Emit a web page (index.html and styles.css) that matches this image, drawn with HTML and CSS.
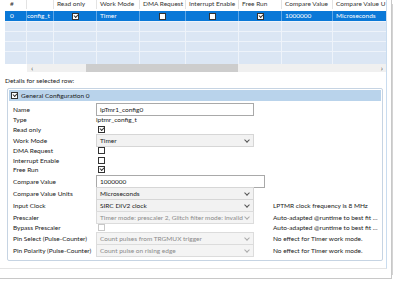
FILE: index.html
```html
<!DOCTYPE html>
<html lang="en">

<head>
    <meta charset="UTF-8">
    <title>LPTMR configuration</title>
    <link rel="stylesheet" href="styles.css">
</head>

<body>
    <div class="frame">
        <div class="panel">
            <div class="grid">
                <div class="row head">
                    <div class="cell c0">#</div>
                    <div class="cell c1"></div>
                    <div class="cell c2">Read only</div>
                    <div class="cell c3">Work Mode</div>
                    <div class="cell c4">DMA Request</div>
                    <div class="cell c5">Interrupt Enable</div>
                    <div class="cell c6">Free Run</div>
                    <div class="cell c7">Compare Value</div>
                    <div class="cell c8">Compare Value U</div>
                </div>
                <div class="row sel">
                    <div class="cell c0">0</div>
                    <div class="cell c1 clip">config_t</div>
                    <div class="cell c2 mid"><span class="box on"></span></div>
                    <div class="cell c3">Timer</div>
                    <div class="cell c4 mid"><span class="box"></span></div>
                    <div class="cell c5 mid"><span class="box"></span></div>
                    <div class="cell c6 mid"><span class="box on"></span></div>
                    <div class="cell c7">1000000</div>
                    <div class="cell c8">Microseconds</div>
                </div>
                <div class="row empty"><div class="cell c0"></div><div class="cell c1"></div><div class="cell c2"></div><div class="cell c3"></div><div class="cell c4"></div><div class="cell c5"></div><div class="cell c6"></div><div class="cell c7"></div><div class="cell c8"></div></div>
                <div class="row empty"><div class="cell c0"></div><div class="cell c1"></div><div class="cell c2"></div><div class="cell c3"></div><div class="cell c4"></div><div class="cell c5"></div><div class="cell c6"></div><div class="cell c7"></div><div class="cell c8"></div></div>
                <div class="row empty"><div class="cell c0"></div><div class="cell c1"></div><div class="cell c2"></div><div class="cell c3"></div><div class="cell c4"></div><div class="cell c5"></div><div class="cell c6"></div><div class="cell c7"></div><div class="cell c8"></div></div>
                <div class="row empty last"><div class="cell c0"></div><div class="cell c1"></div><div class="cell c2"></div><div class="cell c3"></div><div class="cell c4"></div><div class="cell c5"></div><div class="cell c6"></div><div class="cell c7"></div><div class="cell c8"></div></div>
                <div class="hscroll">
                    <div class="corner"></div>
                    <div class="track">
                        <span class="arrow">&lsaquo;</span>
                        <span class="thumb"></span>
                        <span class="arrow right">&rsaquo;</span>
                    </div>
                </div>
            </div>

            <div class="caption">Details for selected row:</div>

            <div class="group">
                <div class="group-head"><span class="box on"></span>General Configuration 0</div>
                <div class="form">
                    <div class="f tall"><span class="lbl">Name</span><span class="input">lpTmr1_config0</span></div>
                    <div class="f"><span class="lbl">Type</span><span class="val">lptmr_config_t</span></div>
                    <div class="f"><span class="lbl">Read only</span><span><span class="box on"></span></span></div>
                    <div class="f tall"><span class="lbl">Work Mode</span><span class="select">Timer<i class="chev"></i></span></div>
                    <div class="f"><span class="lbl">DMA Request</span><span><span class="box"></span></span></div>
                    <div class="f"><span class="lbl">Interrupt Enable</span><span><span class="box"></span></span></div>
                    <div class="f"><span class="lbl">Free Run</span><span><span class="box on"></span></span></div>
                    <div class="f tall"><span class="lbl">Compare Value</span><span class="input wide">1000000</span></div>
                    <div class="f tall"><span class="lbl">Compare Value Units</span><span class="select">Microseconds<i class="chev"></i></span></div>
                    <div class="f tall"><span class="lbl">Input Clock</span><span class="select">SIRC DIV2 clock<i class="chev"></i></span><span class="note">LPTMR clock frequency is 8 MHz</span></div>
                    <div class="f tall"><span class="lbl">Prescaler</span><span class="select off">Timer mode: prescaler 2, Glitch filter mode: invalid<i class="chev"></i></span><span class="note">Auto-adapted @runtime to best fit ...</span></div>
                    <div class="f"><span class="lbl">Bypass Prescaler</span><span><span class="box off"></span></span><span class="note">Auto-adapted @runtime to best fit ...</span></div>
                    <div class="f tall"><span class="lbl">Pin Select (Pulse-Counter)</span><span class="select off">Count pulses from TRGMUX trigger<i class="chev"></i></span><span class="note">No effect for Timer work mode.</span></div>
                    <div class="f tall"><span class="lbl">Pin Polarity (Pulse-Counter)</span><span class="select off">Count pulse on rising edge<i class="chev"></i></span><span class="note">No effect for Timer work mode.</span></div>
                </div>
            </div>
        </div>
    </div>
</body>

</html>
```

FILE: styles.css
```css
body {
    margin: 0;
    background: #fff;
    font-family: Lato, "Open Sans", sans-serif;
    font-size: 6.5px;
    color: #1a1a1a;
    overflow: hidden;
}

.frame {
    width: 391px;
    height: 278px;
    border-right: 1px solid #c8c8c8;
    border-bottom: 1px solid #c8c8c8;
    box-shadow: 5px 0 0 -4px #d4d4d4;
}

.panel {
    width: 381px;
    height: 268px;
    padding-left: 5px;
    border-right: 1px solid #c9dcef;
    border-bottom: 1px solid #e4e4e4;
}

/* table on top */
.grid {
    width: 381px;
}

.row {
    display: flex;
    height: 10px;
}

.cell {
    box-sizing: border-box;
    height: 100%;
    padding-left: 3px;
    line-height: 10px;
    white-space: nowrap;
    overflow: hidden;
    border-right: 1px solid #e3e3e3;
}

.head .cell {
    color: #333;
    margin-top: -1px;
}

.head {
    margin-left: -5px;
    padding-left: 5px;
}

.c0 { width: 22px; padding-left: 5px; }
.c1 { width: 27px; }
.c2 { width: 43px; }
.c3 { width: 43px; }
.c4 { width: 46px; }
.c5 { width: 53px; }
.c6 { width: 43px; }
.c7 { width: 51px; }
.c8 { width: 53px; border-right: none; }

.clip {
    direction: rtl;
    text-align: left;
    padding-left: 0;
}

.mid {
    display: flex;
    justify-content: center;
    align-items: center;
    padding-left: 0;
}

.sel {
    background: #0a78d7;
    color: #fff;
    margin-top: 1px;
}

.sel .cell {
    border-right-color: #5fa6e6;
}

.empty {
    background: #dbe6f4;
    border-top: 1px solid #eef3fa;
    box-sizing: border-box;
}

.empty .cell {
    border-right-color: #eef3fa;
}

.last {
    height: 13px;
}

.hscroll {
    display: flex;
    height: 8px;
}

.corner {
    width: 22px;
}

.track {
    flex: 1;
    background: #f0f0f0;
    display: flex;
    align-items: center;
}

.arrow {
    width: 8px;
    text-align: center;
    margin-left: 1px;
    font-size: 8px;
    line-height: 8px;
    color: #555;
}

.arrow.right {
    margin-left: auto;
}

.thumb {
    margin-left: 50px;
    width: 152px;
    height: 8px;
    background: #cdcdcd;
}

.caption {
    margin-top: 4px;
    height: 12px;
    line-height: 10px;
}

/* details group */
.group {
    margin-left: 2px;
    width: 376px;
    height: 173px;
    border: 1px solid #c6d4e3;
    border-radius: 2px;
    box-sizing: border-box;
    padding: 1px;
}

.group-head {
    display: flex;
    align-items: center;
    height: 11px;
    background: #b9d3eb;
    padding-left: 2px;
}

.group-head .box {
    margin-right: 3px;
}

.form {
    padding: 2px 0 0 4px;
}

.f {
    display: grid;
    grid-template-columns: 83px 177px auto;
    align-items: center;
    height: 9.5px;
}

.f.tall {
    height: 12px;
}

.input,
.select {
    box-sizing: border-box;
    width: 158px;
    height: 13px;
    border: 1px solid #a9a9a9;
    padding-left: 3px;
    line-height: 11px;
    white-space: nowrap;
    overflow: hidden;
    position: relative;
}

.input.wide {
    width: 169px;
}

.select {
    background: #f2f2f2;
    border-color: #d6d6d6;
    padding-right: 12px;
}

.select.off {
    color: #8a8a8a;
    border-color: #dcdcdc;
    background: #f4f4f4;
}

.chev {
    position: absolute;
    right: 4px;
    top: 3px;
    width: 3px;
    height: 3px;
    border-right: 1px solid #555;
    border-bottom: 1px solid #555;
    transform: rotate(45deg);
}

.off .chev {
    border-color: #aaa;
}

.note {
    white-space: nowrap;
}

.box {
    display: block;
    box-sizing: border-box;
    width: 7px;
    height: 7px;
    border: 1px solid #333;
    background: #fff;
    position: relative;
    margin-left: 2px;
}

.mid .box,
.group-head .box {
    margin-left: 0;
}

.box.on::after {
    content: "";
    position: absolute;
    left: 1px;
    top: 0;
    width: 3px;
    height: 2px;
    border-left: 1px solid #333;
    border-bottom: 1px solid #333;
    transform: rotate(-45deg);
}

.box.off {
    border-color: #c8c8c8;
}
```
